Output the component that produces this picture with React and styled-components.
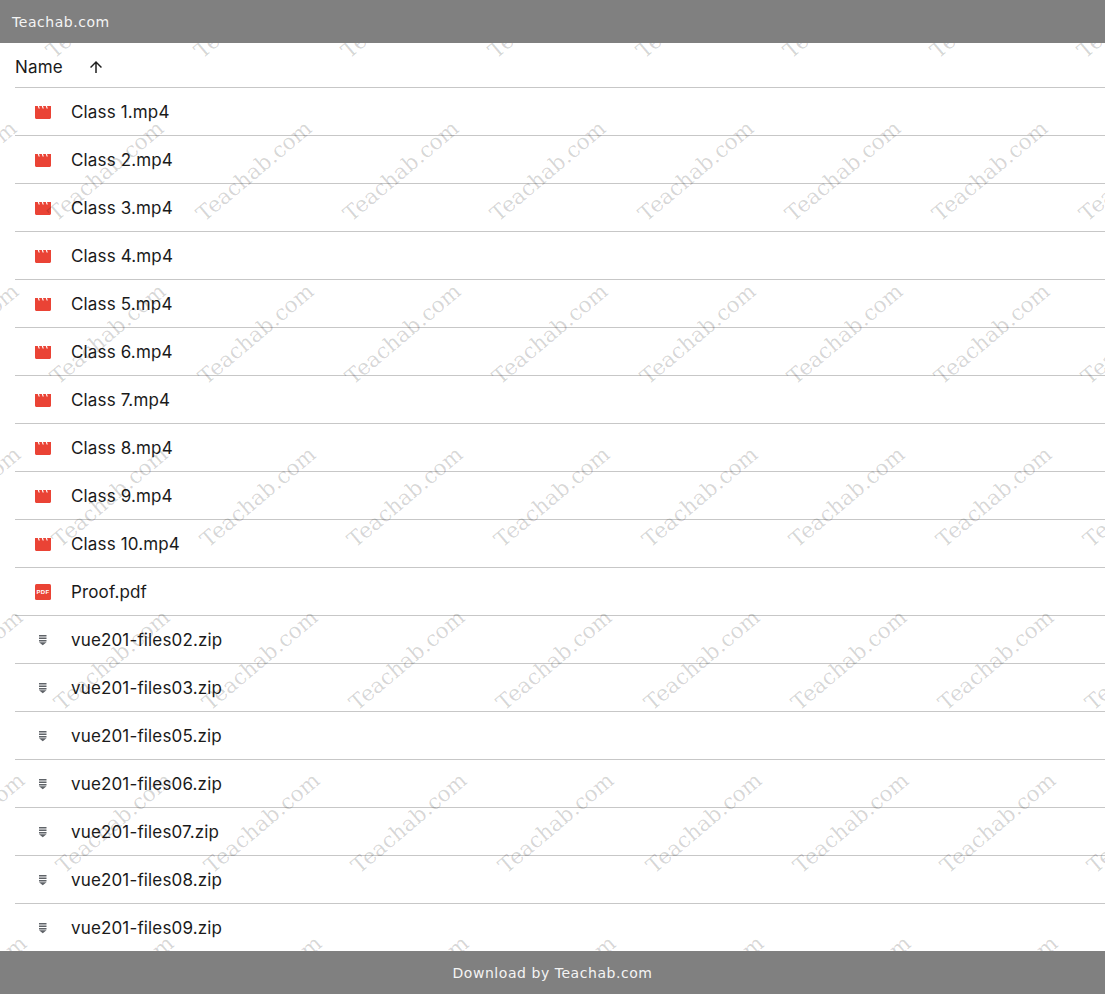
import React from "react";
import styled, { createGlobalStyle } from "styled-components";

const Global = createGlobalStyle`
  html, body { margin: 0; padding: 0; height: 100%; background: #fff; overflow: hidden; }
  #root { height: 100%; }
`;

const Page = styled.div`
  position: relative;
  display: flex;
  flex-direction: column;
  height: 100vh;
  overflow: hidden;
  background: #fff;
`;

const Bar = styled.div`
  position: relative;
  z-index: 2;
  flex: none;
  height: 43px;
  display: flex;
  align-items: center;
  justify-content: ${(p) => (p.$center ? "center" : "flex-start")};
  padding: 0 12px;
  background: #808080;
  color: #f4f4f4;
  font: 14px/1 "DejaVu Sans", Verdana, sans-serif;
  letter-spacing: 0.55px;
`;

const List = styled.div`
  flex: 1;
  min-height: 0;
  overflow: hidden;
  padding-left: 15px;
  font-family: Inter, sans-serif;
  color: #1a1a1a;
`;

const HeadRow = styled.div`
  height: 40px;
  padding-top: 4px;
  display: flex;
  align-items: center;
  box-sizing: content-box;
  border-bottom: 1px solid #c7c7c7;
  font-size: 17px;
  letter-spacing: 0.15px;
`;

const HeadArrow = styled.svg`
  width: 18px;
  height: 18px;
  margin-left: 24px;
  fill: #1f1f1f;
`;

const Row = styled.div`
  height: 47px;
  display: flex;
  align-items: center;
  border-bottom: 1px solid ${(p) => (p.$last ? "transparent" : "#c7c7c7")};
  font-size: 17px;
  letter-spacing: 0.15px;
`;

const IconSlot = styled.div`
  width: 56px;
  padding-left: 20px;
  box-sizing: border-box;
  display: flex;
  align-items: center;
`;

const FileIcon = styled.svg`
  width: 16px;
  height: 16px;
  display: block;
`;

const Mark = styled.span`
  position: absolute;
  z-index: 1;
  transform: translate(-50%, -50%) rotate(-40deg);
  font: 21.5px/1 "DejaVu Serif", serif;
  color: rgba(0, 0, 0, 0.16);
  white-space: nowrap;
  pointer-events: none;
`;

const Video = () => (
  <FileIcon viewBox="0 0 16 16">
    <path fill="#ea4335" d="M0 2H2.800L3.600 4.500H4.800L4 2H6.800L7.600 4.500H8.800L8 2H10.800L11.600 4.500H12.800L12 2H16V13.500C16 14.300 15.300 15 14.500 15H1.500C.7 15 0 14.300 0 13.500Z" />
  </FileIcon>
);

const PdfLabel = styled.text`
  font: 700 6px "Liberation Sans", sans-serif;
  fill: #fff;
  letter-spacing: 0.3px;
`;

const Pdf = () => (
  <FileIcon viewBox="0 0 16 16">
    <rect width="16" height="16" rx="1.500" fill="#ea4335" />
    <PdfLabel x="8" y="10.200" textAnchor="middle">PDF</PdfLabel>
  </FileIcon>
);

const Zip = () => (
  <FileIcon viewBox="0 0 16 16">
    <path fill="#5f6368" d="M4 3h7.500v1.400H4zM4 5.500h7.500v1.400H4zM4 8h7.500v1.400H4zM4 10.300h7.500l-3.750 3z" />
  </FileIcon>
);

const files = [
  ...Array.from({ length: 10 }, (_, i) => ({ name: `Class ${i + 1}.mp4`, Icon: Video })),
  { name: "Proof.pdf", Icon: Pdf },
  ...["02", "03", "05", "06", "07", "08", "09"].map((n) => ({ name: `vue201-files${n}.zip`, Icon: Zip })),
];

const marks = [];
for (let r = 0; r < 7; r++) {
  for (let c = 0; c < 9; c++) {
    marks.push({ x: -43 + r * 2 + c * 147.3, y: 8 + r * 163 });
  }
}

export default function App() {
  return (
    <Page>
      <Global />
      <Bar>Teachab.com</Bar>
      <List>
        <HeadRow>
          Name
          <HeadArrow viewBox="0 0 24 24">
            <path d="M4 12l1.410 1.410L11 7.830V20h2V7.830l5.580 5.590L20 12l-8-8-8 8z" />
          </HeadArrow>
        </HeadRow>
        {files.map(({ name, Icon }, i) => (
          <Row key={name} $last={i === files.length - 1}>
            <IconSlot><Icon /></IconSlot>
            {name}
          </Row>
        ))}
      </List>
      {marks.map((m, i) => (
        <Mark key={i} style={{ left: m.x, top: m.y }}>Teachab.com</Mark>
      ))}
      <Bar $center>Download by Teachab.com</Bar>
    </Page>
  );
}
